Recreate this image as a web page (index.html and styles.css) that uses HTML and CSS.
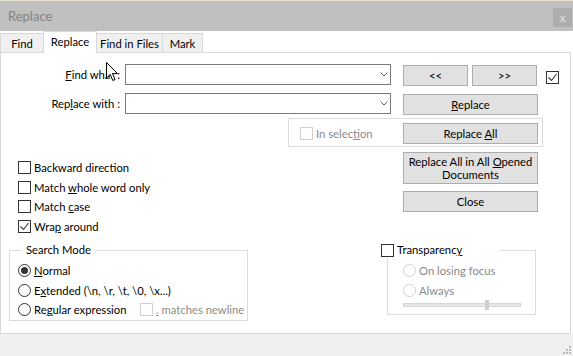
FILE: index.html
```html
<!DOCTYPE html>
<html lang="en">
<head>
    <meta charset="UTF-8">
    <title>Replace</title>
    <link rel="stylesheet" href="styles.css">
</head>
<body>
    <div class="dialog">
        <div class="titlebar">
            <span class="title">Replace</span>
            <span class="close">x</span>
        </div>

        <div class="tabs">
            <span class="tab tab-find">Find</span>
            <span class="tab tab-replace active">Replace</span>
            <span class="tab tab-files">Find in Files</span>
            <span class="tab tab-mark">Mark</span>
        </div>

        <div class="panel">
            <div class="row">
                <label class="field-label"><u>F</u>ind what :</label>
                <div class="combo">
                    <svg width="8" height="5" viewBox="0 0 8 5"><path d="M0.5 0.5 L4 4 L7.5 0.5" fill="none" stroke="#5a5a5a" stroke-width="1"/></svg>
                </div>
                <button class="btn btn-half">&lt;&lt;</button>
                <button class="btn btn-half btn-next">&gt;&gt;</button>
                <span class="check checked row-check">
                    <svg width="11" height="11" viewBox="0 0 11 11"><path d="M1.5 5.5 L4.5 8.5 L9.5 2" fill="none" stroke="#333" stroke-width="1.1"/></svg>
                </span>
            </div>

            <div class="row row-replace">
                <label class="field-label">Rep<u>l</u>ace with :</label>
                <div class="combo">
                    <svg width="8" height="5" viewBox="0 0 8 5"><path d="M0.5 0.5 L4 4 L7.5 0.5" fill="none" stroke="#5a5a5a" stroke-width="1"/></svg>
                </div>
                <button class="btn btn-wide"><u>R</u>eplace</button>
            </div>

            <div class="selection-group">
                <span class="check disabled"></span>
                <span class="muted">In selec<u>t</u>ion</span>
                <button class="btn btn-wide btn-all">Replace <u>A</u>ll</button>
            </div>

            <div class="middle">
                <div class="options">
                    <div class="option"><span class="check"></span><span>Backward direction</span></div>
                    <div class="option"><span class="check"></span><span>Match <u>w</u>hole word only</span></div>
                    <div class="option"><span class="check"></span><span>Match <u>c</u>ase</span></div>
                    <div class="option">
                        <span class="check checked">
                            <svg width="11" height="11" viewBox="0 0 11 11"><path d="M1.5 5.5 L4.5 8.5 L9.5 2" fill="none" stroke="#333" stroke-width="1.1"/></svg>
                        </span>
                        <span>Wra<u>p</u> around</span>
                    </div>
                </div>
                <div class="actions">
                    <button class="btn btn-wide btn-tall">Replace All in All <u>O</u>pened<br>Documents</button>
                    <button class="btn btn-wide">Close</button>
                </div>
            </div>

            <div class="bottom">
                <fieldset class="search-mode">
                    <legend>Search Mode</legend>
                    <div class="option"><span class="radio selected"></span><span><u>N</u>ormal</span></div>
                    <div class="option"><span class="radio"></span><span>E<u>x</u>tended (\n, \r, \t, \0, \x...)</span></div>
                    <div class="option">
                        <span class="radio"></span><span class="regex-label">Re<u>g</u>ular expression</span>
                        <span class="check disabled"></span><span class="muted"><u>.</u> matches newline</span>
                    </div>
                </fieldset>

                <fieldset class="transparency">
                    <legend><span class="check"></span><span>Transparenc<u>y</u></span></legend>
                    <div class="option"><span class="radio disabled"></span><span class="muted">On losing focus</span></div>
                    <div class="option"><span class="radio disabled"></span><span class="muted">Always</span></div>
                    <div class="slider"><span class="thumb"></span></div>
                </fieldset>
            </div>
        </div>

        <div class="footer">
            <svg width="9" height="9" viewBox="0 0 9 9">
                <rect x="7" y="1" width="2" height="2" fill="#bcbcbc"/>
                <rect x="4" y="4" width="2" height="2" fill="#bcbcbc"/>
                <rect x="7" y="4" width="2" height="2" fill="#bcbcbc"/>
                <rect x="1" y="7" width="2" height="2" fill="#bcbcbc"/>
                <rect x="4" y="7" width="2" height="2" fill="#bcbcbc"/>
                <rect x="7" y="7" width="2" height="2" fill="#bcbcbc"/>
            </svg>
        </div>

        <!-- mouse pointer resting over the first label -->
        <svg class="pointer" width="13" height="20" viewBox="0 0 13 20">
            <path d="M0.5 0.5 L0.5 16 L4.2 12.4 L6.8 18.5 L9 17.5 L6.5 11.6 L11.5 11.6 Z" fill="#fff" stroke="#000" stroke-width="1" stroke-linejoin="miter"/>
        </svg>
    </div>
</body>
</html>
```

FILE: styles.css
```css
* {
    box-sizing: border-box;
}
body {
    margin: 0;
    width: 573px;
    height: 356px;
    overflow: hidden;
    background: #fff;
    font-family: Lato, "Noto Sans", sans-serif;
    font-size: 11.25px;
    color: #000;
}
.dialog {
    position: relative;
    height: 356px;
    display: flex;
    flex-direction: column;
}
.titlebar {
    height: 31px;
    flex: none;
    border-top: 1px solid #e6dfcf;
    background: #c0c0c0;
    display: flex;
    align-items: center;
    justify-content: space-between;
    padding: 0 1px 0 8px;
}
.title {
    color: #838383;
    font-size: 13px;
}
.close {
    width: 19px;
    height: 19px;
    margin-top: 3px;
    background: #adadad;
    color: #dadada;
    font-weight: bold;
    font-size: 11px;
    display: flex;
    align-items: center;
    justify-content: center;
}

/* tabs */
.tabs {
    display: flex;
    align-items: flex-end;
    height: 22px;
    flex: none;
}
.tab {
    height: 20px;
    border: 1px solid #d9d9d9;
    border-bottom: none;
    background: #f0f0f0;
    margin-left: -1px;
    text-align: center;
    line-height: 19px;
}
.tab-find {
    margin-left: 0;
    width: 44px;
}
.tab-replace {
    width: 54px;
}
.tab-files {
    width: 67px;
}
.tab-mark {
    width: 41px;
}
.tab.active {
    height: 22px;
    background: #fff;
    position: relative;
    z-index: 1;
}

/* panel */
.panel {
    margin-top: -1px;
    width: 571px;
    height: 282px;
    flex: none;
    border: 1px solid #d9d9d9;
    padding-top: 11px;
}
.row {
    display: flex;
    align-items: flex-start;
    height: 22px;
}
.row-replace {
    margin-top: 7px;
}
.field-label {
    width: 119px;
    margin-right: 5px;
    text-align: right;
    line-height: 21px;
}
.combo {
    width: 266px;
    height: 21px;
    margin-right: 12px;
    border: 1px solid #7a7a7a;
    display: flex;
    align-items: center;
    justify-content: flex-end;
    padding: 0 2px 1px 0;
}
.btn {
    height: 21px;
    padding: 0;
    border: 1px solid #adadad;
    background: #e1e1e1;
    font: inherit;
    color: #000;
}
.row .btn {
    margin-top: 1px;
}
.btn-half {
    width: 65px;
}
.btn-next {
    margin-left: 4px;
}
.btn-wide {
    width: 135px;
}
.btn-tall {
    height: 32px;
    line-height: 13px;
}
.row-check {
    margin: 7px 0 0 9px;
}

/* check boxes and radios */
.check,
.radio {
    width: 13px;
    height: 13px;
    flex: none;
    border: 1px solid #333;
    background: #fff;
    margin-right: 3px;
    display: flex;
    align-items: center;
    justify-content: center;
}
.radio {
    border-radius: 50%;
}
.radio.selected::after {
    content: "";
    width: 7px;
    height: 7px;
    border-radius: 50%;
    background: #333;
}
.check.disabled,
.radio.disabled {
    border-color: #cfcfcf;
}
.muted {
    color: #8a8a8a;
}

.selection-group {
    margin: 3px 0 0 287px;
    width: 255px;
    height: 29px;
    border: 1px solid #dcdcdc;
    display: flex;
    align-items: center;
    padding: 1px 4px 0 11px;
}
.btn-all {
    margin-left: auto;
}

.middle {
    display: flex;
}
.options {
    margin-left: 17px;
    padding-top: 11px;
}
.option {
    display: flex;
    align-items: center;
    height: 19.5px;
    white-space: nowrap;
}
.actions {
    margin: 0 32px 0 auto;
    padding-top: 5px;
    display: flex;
    flex-direction: column;
    gap: 7px;
}

/* group boxes */
.bottom {
    display: flex;
    align-items: flex-start;
    margin-top: 6px;
}
fieldset {
    margin: 0;
    padding: 3px 0 0 0;
    border: 1px solid #dcdcdc;
    min-width: 0;
}
legend {
    padding: 0 4px;
    line-height: 16px;
}
.search-mode {
    margin-left: 8px;
    width: 239px;
    padding-left: 8px;
}
.search-mode legend {
    margin-left: 4px;
}
.regex-label {
    width: 106px;
}
.transparency {
    margin-left: 139px;
    width: 149px;
    padding-left: 15px;
    padding-bottom: 7px;
}
.transparency legend {
    display: flex;
    align-items: center;
    padding: 0 38px 0 0;
    margin-left: -22px;
}
.slider {
    position: relative;
    width: 118px;
    height: 4px;
    margin-top: 3px;
    background: #e7e7e7;
    border: 1px solid #d6d6d6;
}
.thumb {
    position: absolute;
    left: 81px;
    top: -4px;
    width: 4px;
    height: 10px;
    background: #cdcdcd;
}

.footer {
    flex: 1;
    background: #f0f0f0;
    display: flex;
    justify-content: flex-end;
    align-items: flex-end;
    padding: 0 2px 2px 0;
}
.pointer {
    position: absolute;
    left: 106px;
    top: 62px;
}
```
